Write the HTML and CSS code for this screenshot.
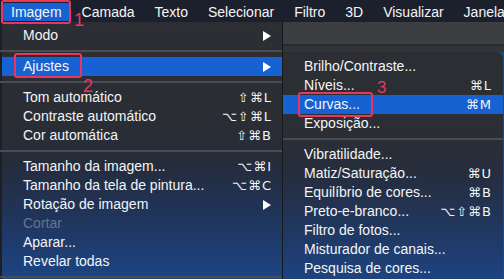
FILE: index.html
```html
<!DOCTYPE html>
<html lang="pt">
<head>
<meta charset="utf-8">
<link rel="stylesheet" href="styles.css">
</head>
<body>
<div class="menubar">
  <span class="mb-item active">Imagem<span class="ann-box box1"></span></span>
  <span class="mb-item">Camada</span>
  <span class="mb-item">Texto</span>
  <span class="mb-item">Selecionar</span>
  <span class="mb-item">Filtro</span>
  <span class="mb-item">3D</span>
  <span class="mb-item">Visualizar</span>
  <span class="mb-item">Janela</span>
  <span class="ann-num num1">1</span>
</div>
<div class="workspace">
  <div class="menu">
    <div class="row"><span>Modo</span><svg class="arrow" viewBox="0 0 8 10"><polygon points="0,0 8,5 0,10" fill="#fff"/></svg></div>
    <div class="sep"></div>
    <div class="row hl"><span>Ajustes</span><svg class="arrow" viewBox="0 0 8 10"><polygon points="0,0 8,5 0,10" fill="#fff"/></svg><span class="ann-box box2"></span><span class="ann-num num2">2</span></div>
    <div class="sep"></div>
    <div class="row"><span>Tom automático</span><span class="kbd">⇧⌘L</span></div>
    <div class="row"><span>Contraste automático</span><span class="kbd">⌥⇧⌘L</span></div>
    <div class="row"><span>Cor automática</span><span class="kbd">⇧⌘B</span></div>
    <div class="sep"></div>
    <div class="row"><span>Tamanho da imagem...</span><span class="kbd">⌥⌘I</span></div>
    <div class="row"><span>Tamanho da tela de pintura...</span><span class="kbd">⌥⌘C</span></div>
    <div class="row"><span>Rotação de imagem</span><svg class="arrow" viewBox="0 0 8 10"><polygon points="0,0 8,5 0,10" fill="#fff"/></svg></div>
    <div class="row disabled"><span>Cortar</span></div>
    <div class="row"><span>Aparar...</span></div>
    <div class="row"><span>Revelar todas</span></div>
    <div class="sep"></div>
  </div>
  <div class="side">
    <div class="optbar"></div>
    <div class="submenu">
      <div class="row"><span>Brilho/Contraste...</span></div>
      <div class="row"><span>Níveis...</span><span class="kbd">⌘L</span><span class="ann-num num3">3</span></div>
      <div class="row hl"><span>Curvas...</span><span class="kbd">⌘M</span><span class="ann-box box3"></span></div>
      <div class="row"><span>Exposição...</span></div>
      <div class="sep"></div>
      <div class="row"><span>Vibratilidade...</span></div>
      <div class="row"><span>Matiz/Saturação...</span><span class="kbd">⌘U</span></div>
      <div class="row"><span>Equilíbrio de cores...</span><span class="kbd">⌘B</span></div>
      <div class="row"><span>Preto-e-branco...</span><span class="kbd">⌥⇧⌘B</span></div>
      <div class="row"><span>Filtro de fotos...</span></div>
      <div class="row"><span>Misturador de canais...</span></div>
      <div class="row"><span>Pesquisa de cores...</span></div>
    </div>
  </div>
</div>
</body>
</html>
```

FILE: styles.css
```css
* { box-sizing: border-box; }
html, body {
  margin: 0;
  padding: 0;
  width: 504px;
  height: 279px;
  overflow: hidden;
  background: #1c4a88;
  font-family: "Liberation Sans", Arial, sans-serif;
  font-size: 14px;
  color: #f4f5f7;
}
.menubar {
  position: relative;
  display: flex;
  height: 22px;
  padding: 3px 0 0 1px;
  background: #1c202c;
}
.mb-item {
  position: relative;
  height: 18px;
  line-height: 18px;
  padding: 0 8px;
  margin: 0 2px;
  white-space: nowrap;
}
.mb-item.active {
  background: #1762d2;
  border-radius: 2px;
}
.ann-box {
  position: absolute;
  border: 2px solid #e8365f;
  border-radius: 3px;
  pointer-events: none;
}
.box1 { left: -2px; right: -1px; top: -3px; bottom: -3px; }
.ann-num {
  position: absolute;
  color: #e8365f;
  font-size: 18px;
  line-height: 18px;
  font-family: "Liberation Sans", Arial, sans-serif;
}
.num1 { left: 74px; top: 11px; }
.workspace {
  display: flex;
  height: 257px;
}
.menu {
  width: 283px;
  height: 257px;
  padding-top: 4px;
  border-left: 2px solid #1d1f24;
  border-right: 1px solid #18191d;
  background: linear-gradient(180deg, #2c2e33 0%, #2a2d33 38%, #252c3b 55%, #20345a 75%, #1c4584 100%);
}
.row {
  position: relative;
  display: flex;
  align-items: center;
  justify-content: space-between;
  height: 19px;
  line-height: 19px;
  white-space: nowrap;
}
.menu .row { padding: 0 10px 0 21px; }
.row.hl { background: #1762d2; }
.row.disabled { color: #66758d; }
.kbd {
  font-family: "DejaVu Sans", "Liberation Sans", sans-serif;
  font-size: 13px;
  letter-spacing: 1px;
}
.arrow {
  width: 8px;
  height: 10px;
  margin-right: 1px;
}
.sep {
  height: 12px;
  padding: 5px 0;
}
.sep::before {
  content: "";
  display: block;
  height: 2px;
  background: #4a4c52;
}
.menu .sep::before { margin-left: -2px; margin-right: 0; }
.box2 { left: 12px; top: -4px; width: 68px; height: 25px; }
.num2 { left: 81px; top: 20px; }
.side {
  flex: 1;
  display: flex;
  flex-direction: column;
}
.optbar {
  height: 30px;
  background: linear-gradient(180deg, #3d3e42 0px, #3d3e42 22px, #2a2b2e 22px, #2a2b2e 24px, #333438 24px);
}
.submenu {
  flex: 1;
  width: 220px;
  padding-top: 5px;
  border-radius: 0 6px 0 0;
  background: linear-gradient(180deg, #2c2e33 0%, #2b2e34 35%, #262d3c 52%, #21355a 74%, #1d4380 100%);
}
.submenu .row { padding: 0 11px 0 21px; }
.submenu .kbd { letter-spacing: 1px; }
.submenu .sep::before { margin: 0; }
.box3 { left: 15px; top: -3px; width: 75px; height: 25px; }
.num3 { left: 94px; top: 3px; font-size: 17px; line-height: 17px; }
```
